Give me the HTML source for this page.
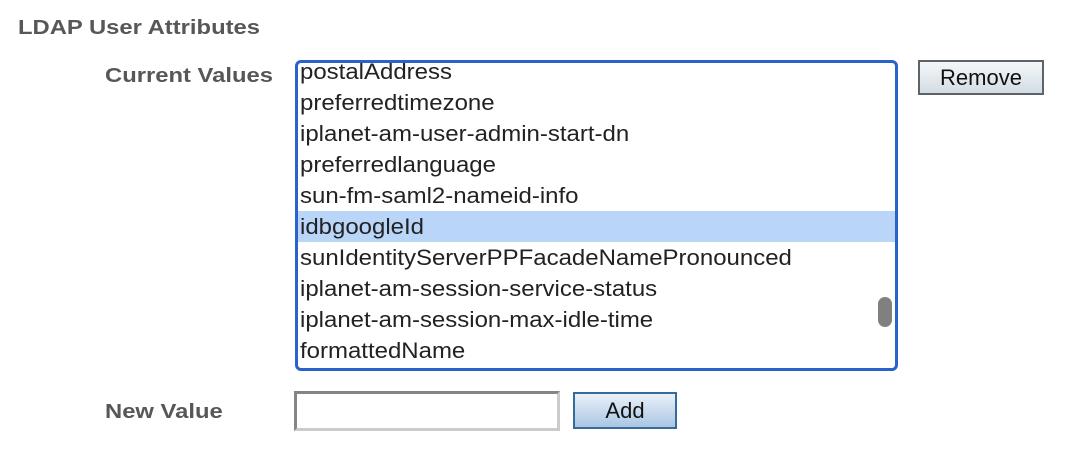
<!DOCTYPE html>
<html><head><style>
body{margin:0;width:1066px;height:450px;background:#fff;font-family:"Liberation Sans",Arial,sans-serif;position:relative;overflow:hidden}
.lbl{position:absolute;font-weight:bold;color:#575757;font-size:20px;white-space:nowrap;transform-origin:0 50%;transform:scaleX(1.19)}
.box{position:absolute;left:295px;top:60px;width:597px;height:305px;border:3px solid #2a62c9;border-radius:6px;overflow:hidden;box-sizing:content-box}
.row{position:absolute;left:0;width:100%;height:31px;line-height:31px;font-size:22px;color:#222;padding-left:2px;box-sizing:border-box;white-space:nowrap}
.row span{display:inline-block;transform-origin:0 50%;transform:scaleX(1.09)}
.sel{background:#b9d5f8}
.thumb{position:absolute;left:580px;top:234px;width:14px;height:30px;border-radius:7px;background:#808080}
.btn{position:absolute;font-size:22px;color:#111;text-align:center;box-sizing:border-box}
</style></head><body>
<div class="lbl" style="left:18px;top:17px;">LDAP User Attributes</div>
<div class="lbl" style="left:105px;top:65px;">Current Values</div>
<div class="lbl" style="left:105px;top:401px;">New Value</div>
<div class="box">
<div class="row" style="top:-7px"><span>postalAddress</span></div>
<div class="row" style="top:24px"><span>preferredtimezone</span></div>
<div class="row" style="top:55px"><span>iplanet-am-user-admin-start-dn</span></div>
<div class="row" style="top:86px"><span>preferredlanguage</span></div>
<div class="row" style="top:117px"><span>sun-fm-saml2-nameid-info</span></div>
<div class="row sel" style="top:148px"><span>idbgoogleId</span></div>
<div class="row" style="top:179px"><span>sunIdentityServerPPFacadeNamePronounced</span></div>
<div class="row" style="top:210px"><span>iplanet-am-session-service-status</span></div>
<div class="row" style="top:241px"><span>iplanet-am-session-max-idle-time</span></div>
<div class="row" style="top:272px"><span>formattedName</span></div>
<div class="thumb"></div>
</div>
<div class="btn" style="left:918px;top:60px;width:126px;height:35px;line-height:31px;border:2px solid #5f6368;background:linear-gradient(#f4f7f9,#d3dde4)">Remove</div>
<div style="position:absolute;left:294px;top:391px;width:266px;height:40px;box-sizing:border-box;border:3px solid;border-color:#858585 #cbcbcb #cbcbcb #858585;background:#fff"></div>
<div class="btn" style="left:573px;top:392px;width:104px;height:37px;line-height:33px;border:2px solid #356a99;background:linear-gradient(#eaf1f9,#a9c6e3)">Add</div>
</body></html>
